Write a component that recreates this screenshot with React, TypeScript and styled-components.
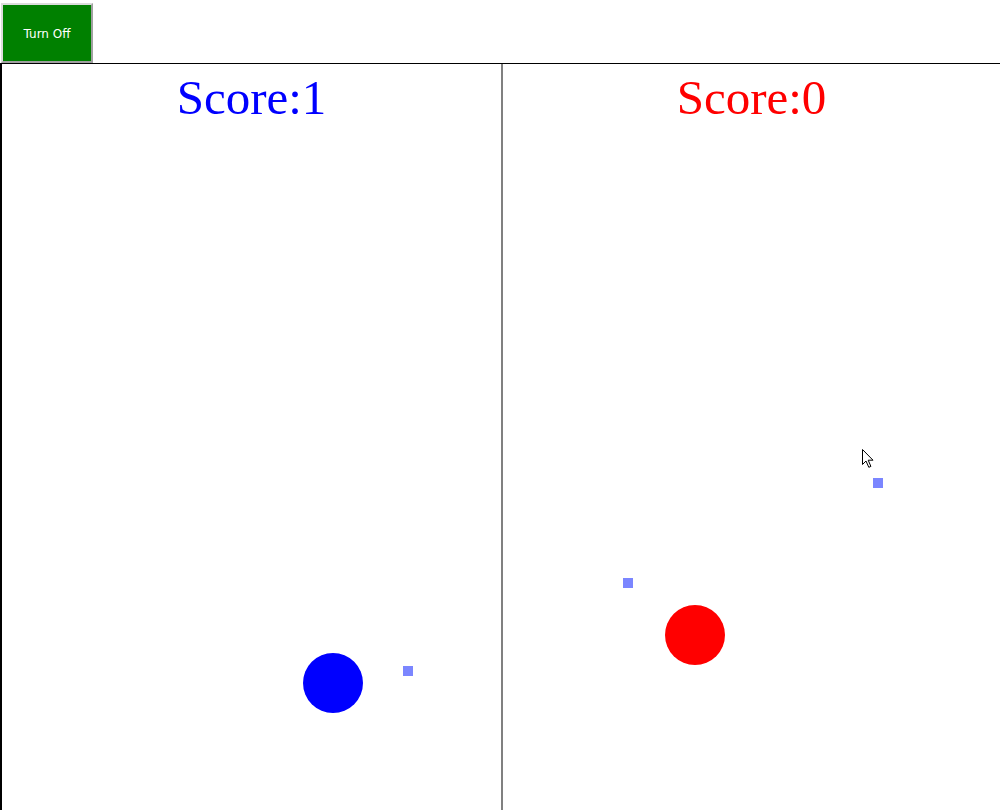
import * as React from 'react';
import styled, { createGlobalStyle } from 'styled-components';

const GlobalStyle = createGlobalStyle`
  html, body {
    margin: 0;
    padding: 0;
    background: #ffffff;
    overflow: hidden;
  }
`;

const Page = styled.div`
  width: 1000px;
  height: 810px;
  display: flex;
  flex-direction: column;
`;

const Toolbar = styled.div`
  height: 63px;
  padding: 3px 0 0 1px;
  box-sizing: border-box;
  display: flex;
  align-items: flex-start;
`;

const ToggleButton = styled.button`
  width: 92px;
  height: 60px;
  box-sizing: border-box;
  background: #008000;
  color: #ffffff;
  border: 2px solid;
  border-color: #dcdcdc #a0a0a0 #a0a0a0 #dcdcdc;
  font-family: "DejaVu Sans", Verdana, sans-serif;
  font-size: 12px;
  padding: 2px 0 0;
  cursor: pointer;
`;

const Arena = styled.div`
  flex: 1;
  display: flex;
  border-top: 1px solid #000000;
`;

const Field = styled.div<{ $side: 'left' | 'right' }>`
  position: relative;
  flex: ${(p) => (p.$side === 'left' ? '0 0 502px' : '1')};
  box-sizing: border-box;
  border-left: ${(p) => (p.$side === 'left' ? '2px solid #000000' : '1px solid #808080')};
  border-right: ${(p) => (p.$side === 'left' ? '1px solid #808080' : 'none')};
  overflow: hidden;
`;

const Score = styled.div<{ $color: string }>`
  margin-top: 6px;
  text-align: center;
  font-family: "Liberation Serif", "Times New Roman", serif;
  font-size: 49px;
  line-height: 56px;
  color: ${(p) => p.$color};
`;

const Player = styled.div<{ $color: string }>`
  position: absolute;
  width: 60px;
  height: 60px;
  border-radius: 50%;
  background: ${(p) => p.$color};
`;

const Pellet = styled.div`
  position: absolute;
  width: 10px;
  height: 10px;
  background: #7b86ff;
`;

const Pointer = styled.svg`
  position: absolute;
  width: 13px;
  height: 20px;
`;

type Props = {
  side: 'left' | 'right',
  color: string,
  score: number,
  player: { x: number, y: number },
  pellets: { x: number, y: number }[],
  pointer?: { x: number, y: number },
};

const PlayerField = ({ side, color, score, player, pellets, pointer }: Props) => (
  <Field $side={side}>
    <Score $color={color}>Score:{score}</Score>
    <Player $color={color} style={{ left: player.x, top: player.y }} />
    {pellets.map((p, i) => (
      <Pellet key={i} style={{ left: p.x, top: p.y }} />
    ))}
    {pointer && (
      <Pointer viewBox="0 0 13 20" style={{ left: pointer.x, top: pointer.y }}>
        <path d="M0.5 0.5 L0.5 15.5 L4 12 L6.8 18.3 L8.9 17.4 L6.2 11.2 L11 11.2 Z"
              fill="#ffffff"
              stroke="#000000"
              strokeWidth="1"
              strokeLinejoin="miter" />
      </Pointer>
    )}
  </Field>
);

const App = () => {
  const [running, setRunning] = React.useState(true);

  return (
    <Page>
      <GlobalStyle />
      <Toolbar>
        <ToggleButton onClick={() => setRunning(!running)}>
          {running ? 'Turn Off' : 'Turn On'}
        </ToggleButton>
      </Toolbar>
      <Arena>
        <PlayerField side="left"
                     color="#0000ff"
                     score={1}
                     player={{ x: 301, y: 589 }}
                     pellets={[{ x: 401, y: 602 }]} />
        <PlayerField side="right"
                     color="#ff0000"
                     score={0}
                     player={{ x: 162, y: 541 }}
                     pellets={[{ x: 120, y: 514 }, { x: 370, y: 414 }]}
                     pointer={{ x: 359, y: 385 }} />
      </Arena>
    </Page>
  );
};

export default App;
